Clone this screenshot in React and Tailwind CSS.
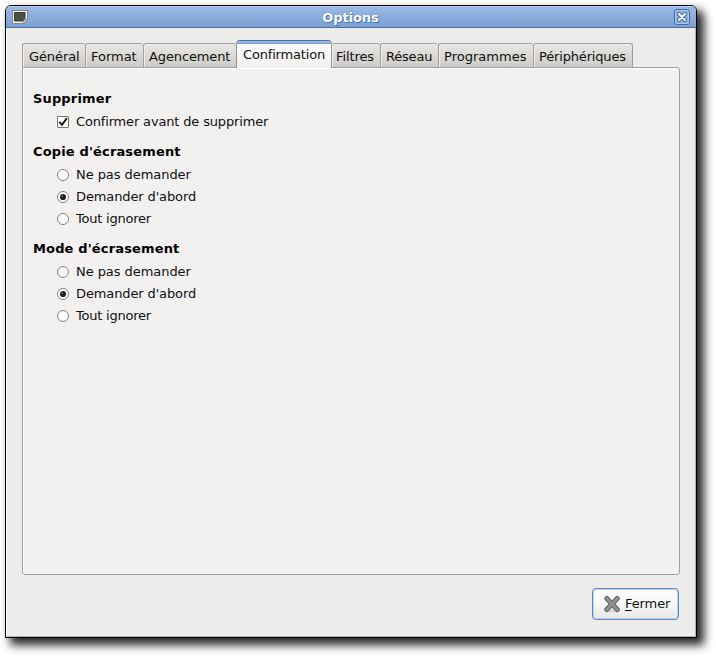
import React from "react";

const tabs = [
  { label: "Général", box: "w-[63px]", text: "tracking-[-0.1px]" },
  { label: "Format", box: "w-[58px]", text: "tracking-[-0.03px]" },
  { label: "Agencement", box: "w-[93px]", text: "tracking-[-0.12px]" },
  { label: "Confirmation", box: "w-[96px]", text: "tracking-[-0.17px]", active: true },
  { label: "Filtres", box: "w-[48px]", text: "tracking-[-0.1px]" },
  { label: "Réseau", box: "w-[58px]", text: "tracking-[-0.2px]" },
  { label: "Programmes", box: "w-[95px]", text: "tracking-[0.02px]" },
  { label: "Périphériques", box: "w-[100px]", text: "tracking-[-0.17px]", last: true },
];

function Tab({ tab, first, afterActive }) {
  if (tab.active) {
    return (
      <div
        className={`${tab.box} ${tab.text} relative z-10 -mb-px h-[28px] shrink-0 overflow-hidden rounded-t-[4px] border-x border-t border-x-[#979693] border-t-[#4a70a8] bg-linear-to-b from-[#fdfdfd] to-[#f2f1f0]`}
      >
        <div className="h-[3px] bg-linear-to-b from-[#9dbbe6] to-[#7ea3d6]" />
        <div className="pl-[6px] leading-[21px]">{tab.label}</div>
      </div>
    );
  }
  return (
    <div
      className={`${tab.box} ${tab.text} h-[24px] shrink-0 rounded-t-[3px] border-t border-[#a09f9b] ${afterActive ? "" : "border-l"} ${tab.last ? "border-r" : ""} bg-linear-to-b from-[#e8e7e5] to-[#cdccc8] ${afterActive ? "pl-[4px]" : first ? "pl-[6px]" : "pl-[5px]"} leading-[26px] shadow-[inset_1px_1px_0_#efeeec]`}
    >
      {tab.label}
    </div>
  );
}

function Radio({ label, checked, tracking }) {
  return (
    <div className="flex h-[22px] items-center pl-[34px]">
      <svg width="12" height="12" viewBox="0 0 12 12" className="shrink-0">
        <circle cx="6" cy="6" r="5.500" fill="#fff" stroke="#81807d" />
        {checked && <circle cx="6" cy="6" r="3.100" fill="#222" />}
        {checked && <circle cx="5.100" cy="5.100" r="0.9" fill="#777" />}
      </svg>
      <span className={`ml-[7px] ${tracking}`}>{label}</span>
    </div>
  );
}

function Heading({ children }) {
  return (
    <div className="h-[20px] pl-[10px] leading-[20px] font-bold tracking-[0.15px] text-black">
      {children}
    </div>
  );
}

function RadioGroup({ title }) {
  return (
    <section>
      <Heading>{title}</Heading>
      <div className="mt-[2px]">
        <Radio label="Ne pas demander" tracking="tracking-[-0.06px]" />
        <Radio label="Demander d'abord" tracking="tracking-[-0.12px]" checked />
        <Radio label="Tout ignorer" tracking="tracking-[-0.22px]" />
      </div>
    </section>
  );
}

export default function App() {
  return (
    <div className="h-[657px] w-[716px] overflow-hidden bg-white pt-[5px] pl-[5px] font-['DejaVu_Sans',sans-serif] text-[13px] whitespace-nowrap text-[#101010]">
      <div className="flex h-[633px] w-[692px] flex-col overflow-hidden rounded-t-[6px] border border-black bg-[#edecea] shadow-[6px_6px_10px_1px_rgba(0,0,0,0.85)]">
        <header className="flex h-[22px] shrink-0 items-center border-b border-[#4a70a8] bg-linear-to-b from-[#9cbbe7] to-[#7ba0d2] shadow-[inset_0_1px_0_#b5cdf0]">
          <svg width="16" height="14" viewBox="0 0 16 14" className="ml-[6px]">
            <path d="M.5.5h15v9l-4 4H.5z" fill="#f4f4f2" stroke="#85857f" />
            <path d="M2.500 2.500h10.500v6l-2 2.500h-8.500z" fill="#4b504d" stroke="#343936" />
            <path d="M15.500 9.500h-3.500l-.5 4z" fill="#d2d2ce" stroke="#85857f" strokeWidth=".8" />
          </svg>
          <div className="flex-1 pt-[2px] pr-[1px] text-center font-bold tracking-[-0.1px] text-white [text-shadow:1px_1px_0_#4a70a8,0_0_1px_#4a70a8]">
            Options
          </div>
          <svg width="16" height="16" viewBox="0 0 16 16" className="mr-[6px]">
            <rect x=".5" y=".5" width="15" height="15" rx="2.500" fill="#8fb0de" stroke="#456a9f" />
            <rect x="1.500" y="1.500" width="13" height="13" rx="1.500" fill="none" stroke="#a9c4ea" />
            <path d="M5 5l6 6M11 5l-6 6" stroke="#456a9f" strokeWidth="4" strokeLinecap="round" />
            <path d="M5 5l6 6M11 5l-6 6" stroke="#f0f5fc" strokeWidth="2.200" strokeLinecap="round" />
          </svg>
        </header>
        <main className="flex flex-1 flex-col border border-t-0 border-r-[#b5b4b0] border-b-[#b5b4b0] border-l-white pt-[12px] pl-[15px]">
          <nav className="flex h-[27px] shrink-0 items-end">
            {tabs.map((t, i) => (
              <Tab key={t.label} tab={t} first={i === 0} afterActive={i === 4} />
            ))}
          </nav>
          <div className="h-[508px] w-[658px] shrink-0 rounded-[3px] rounded-tl-none border border-[#a09f9b] bg-[#f2f1f0] pt-[21px] shadow-[inset_1px_1px_0_#fff]">
            <section>
              <Heading>Supprimer</Heading>
              <div className="mt-[2px] flex h-[22px] items-center pl-[34px]">
                <svg width="12" height="12" viewBox="0 0 12 12" className="shrink-0">
                  <rect x=".5" y=".5" width="11" height="11" rx=".5" fill="#fff" stroke="#777673" />
                  <path d="M2.300 5.800l2.700 3L9.900 2.100" fill="none" stroke="#111" strokeWidth="1.800" />
                </svg>
                <span className="ml-[7px] tracking-[-0.16px]">Confirmer avant de supprimer</span>
              </div>
            </section>
            <div className="mt-[9px]">
              <RadioGroup title="Copie d'écrasement" />
            </div>
            <div className="mt-[9px]">
              <RadioGroup title="Mode d'écrasement" />
            </div>
          </div>
          <footer className="mt-[13px] flex justify-end pr-[16px]">
            <button className="flex h-[32px] w-[87px] items-center rounded-[4px] border border-[#6287bd] bg-linear-to-b from-white via-[#f8f8f7] to-[#e9e8e6] pl-[10px] shadow-[inset_0_0_0_1px_#bed2ee]">
              <svg width="18" height="18" viewBox="0 0 18 18" className="shrink-0">
                <ellipse cx="9.500" cy="16" rx="8" ry="1.500" fill="#000" opacity=".1" />
                <path d="M3.800 3.500l10.500 11M14.300 3.500l-10.500 11" stroke="#5f615d" strokeWidth="5" strokeLinecap="round" />
                <path d="M3.800 3.500l10.500 11M14.300 3.500l-10.500 11" stroke="#8f918d" strokeWidth="3.200" strokeLinecap="round" />
              </svg>
              <span className="ml-[4px] tracking-[-0.1px]">
                <span className="underline underline-offset-2">F</span>ermer
              </span>
            </button>
          </footer>
        </main>
      </div>
    </div>
  );
}
